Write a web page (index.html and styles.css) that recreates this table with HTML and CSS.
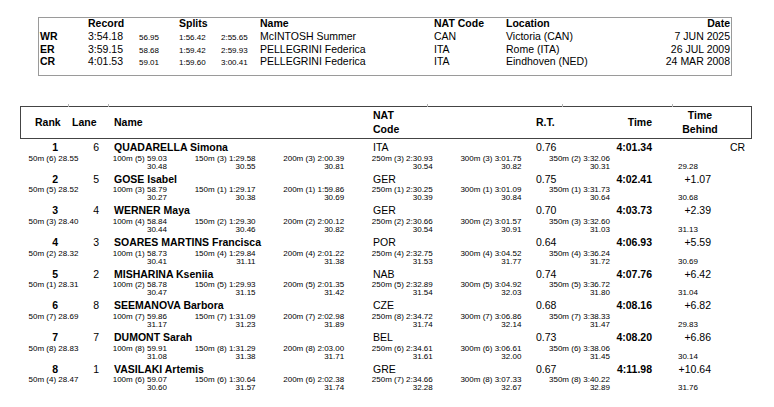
FILE: index.html
```html
<!DOCTYPE html>
<html>
<head>
<meta charset="utf-8">
<link rel="stylesheet" href="styles.css">
</head>
<body>
<div class="records">
  <div class="rec-row rec-head">
    <span></span><span>Record</span><span></span><span>Splits</span><span></span><span>Name</span><span>NAT Code</span><span>Location</span><span class="date">Date</span>
  </div>
  <div class="rec-row">
    <span class="code">WR</span><span>3:54.18</span><span class="sm">56.95</span><span class="sm">1:56.42</span><span class="sm">2:55.65</span><span>McINTOSH Summer</span><span>CAN</span><span>Victoria (CAN)</span><span class="date">7 JUN 2025</span>
  </div>
  <div class="rec-row">
    <span class="code">ER</span><span>3:59.15</span><span class="sm">58.68</span><span class="sm">1:59.42</span><span class="sm">2:59.93</span><span>PELLEGRINI Federica</span><span>ITA</span><span>Rome (ITA)</span><span class="date">26 JUL 2009</span>
  </div>
  <div class="rec-row">
    <span class="code">CR</span><span>4:01.53</span><span class="sm">59.01</span><span class="sm">1:59.60</span><span class="sm">3:00.41</span><span>PELLEGRINI Federica</span><span>ITA</span><span>Eindhoven (NED)</span><span class="date">24 MAR 2008</span>
  </div>
</div>

<div class="results">
  <div class="res-head">
    <i class="tick t1"></i><i class="tick t2"></i><i class="tick t3"></i><i class="tick t4"></i><i class="tick t5"></i>
    <span>Rank</span><span>Lane</span><span>Name</span><span>NAT<br>Code</span><span>R.T.</span><span class="h-time">Time</span><span class="h-behind">Time<br>Behind</span><span></span>
  </div>

  <div class="athlete">
    <div class="main"><span class="rank">1</span><span class="lane">6</span><span class="name">QUADARELLA Simona</span><span>ITA</span><span>0.76</span><span class="time">4:01.34</span><span class="behind"></span><span class="rec">CR</span></div>
    <div class="splits">
      <div class="sp"><span>50m (6) 28.55</span></div>
      <div class="sp"><span>100m (5) 59.03</span><span>30.48</span></div>
      <div class="sp"><span>150m (3) 1:29.58</span><span>30.55</span></div>
      <div class="sp"><span>200m (3) 2:00.39</span><span>30.81</span></div>
      <div class="sp"><span>250m (3) 2:30.93</span><span>30.54</span></div>
      <div class="sp"><span>300m (3) 3:01.75</span><span>30.82</span></div>
      <div class="sp"><span>350m (2) 3:32.06</span><span>30.31</span></div>
      <div class="lap"><span>&nbsp;</span><span>29.28</span></div>
    </div>
  </div>

  <div class="athlete">
    <div class="main"><span class="rank">2</span><span class="lane">5</span><span class="name">GOSE Isabel</span><span>GER</span><span>0.75</span><span class="time">4:02.41</span><span class="behind">+1.07</span><span class="rec"></span></div>
    <div class="splits">
      <div class="sp"><span>50m (5) 28.52</span></div>
      <div class="sp"><span>100m (3) 58.79</span><span>30.27</span></div>
      <div class="sp"><span>150m (1) 1:29.17</span><span>30.38</span></div>
      <div class="sp"><span>200m (1) 1:59.86</span><span>30.69</span></div>
      <div class="sp"><span>250m (1) 2:30.25</span><span>30.39</span></div>
      <div class="sp"><span>300m (1) 3:01.09</span><span>30.84</span></div>
      <div class="sp"><span>350m (1) 3:31.73</span><span>30.64</span></div>
      <div class="lap"><span>&nbsp;</span><span>30.68</span></div>
    </div>
  </div>

  <div class="athlete">
    <div class="main"><span class="rank">3</span><span class="lane">4</span><span class="name">WERNER Maya</span><span>GER</span><span>0.70</span><span class="time">4:03.73</span><span class="behind">+2.39</span><span class="rec"></span></div>
    <div class="splits">
      <div class="sp"><span>50m (3) 28.40</span></div>
      <div class="sp"><span>100m (4) 58.84</span><span>30.44</span></div>
      <div class="sp"><span>150m (2) 1:29.30</span><span>30.46</span></div>
      <div class="sp"><span>200m (2) 2:00.12</span><span>30.82</span></div>
      <div class="sp"><span>250m (2) 2:30.66</span><span>30.54</span></div>
      <div class="sp"><span>300m (2) 3:01.57</span><span>30.91</span></div>
      <div class="sp"><span>350m (3) 3:32.60</span><span>31.03</span></div>
      <div class="lap"><span>&nbsp;</span><span>31.13</span></div>
    </div>
  </div>

  <div class="athlete">
    <div class="main"><span class="rank">4</span><span class="lane">3</span><span class="name">SOARES MARTINS Francisca</span><span>POR</span><span>0.64</span><span class="time">4:06.93</span><span class="behind">+5.59</span><span class="rec"></span></div>
    <div class="splits">
      <div class="sp"><span>50m (2) 28.32</span></div>
      <div class="sp"><span>100m (1) 58.73</span><span>30.41</span></div>
      <div class="sp"><span>150m (4) 1:29.84</span><span>31.11</span></div>
      <div class="sp"><span>200m (4) 2:01.22</span><span>31.38</span></div>
      <div class="sp"><span>250m (4) 2:32.75</span><span>31.53</span></div>
      <div class="sp"><span>300m (4) 3:04.52</span><span>31.77</span></div>
      <div class="sp"><span>350m (4) 3:36.24</span><span>31.72</span></div>
      <div class="lap"><span>&nbsp;</span><span>30.69</span></div>
    </div>
  </div>

  <div class="athlete">
    <div class="main"><span class="rank">5</span><span class="lane">2</span><span class="name">MISHARINA Kseniia</span><span>NAB</span><span>0.74</span><span class="time">4:07.76</span><span class="behind">+6.42</span><span class="rec"></span></div>
    <div class="splits">
      <div class="sp"><span>50m (1) 28.31</span></div>
      <div class="sp"><span>100m (2) 58.78</span><span>30.47</span></div>
      <div class="sp"><span>150m (5) 1:29.93</span><span>31.15</span></div>
      <div class="sp"><span>200m (5) 2:01.35</span><span>31.42</span></div>
      <div class="sp"><span>250m (5) 2:32.89</span><span>31.54</span></div>
      <div class="sp"><span>300m (5) 3:04.92</span><span>32.03</span></div>
      <div class="sp"><span>350m (5) 3:36.72</span><span>31.80</span></div>
      <div class="lap"><span>&nbsp;</span><span>31.04</span></div>
    </div>
  </div>

  <div class="athlete">
    <div class="main"><span class="rank">6</span><span class="lane">8</span><span class="name">SEEMANOVA Barbora</span><span>CZE</span><span>0.68</span><span class="time">4:08.16</span><span class="behind">+6.82</span><span class="rec"></span></div>
    <div class="splits">
      <div class="sp"><span>50m (7) 28.69</span></div>
      <div class="sp"><span>100m (7) 59.86</span><span>31.17</span></div>
      <div class="sp"><span>150m (7) 1:31.09</span><span>31.23</span></div>
      <div class="sp"><span>200m (7) 2:02.98</span><span>31.89</span></div>
      <div class="sp"><span>250m (8) 2:34.72</span><span>31.74</span></div>
      <div class="sp"><span>300m (7) 3:06.86</span><span>32.14</span></div>
      <div class="sp"><span>350m (7) 3:38.33</span><span>31.47</span></div>
      <div class="lap"><span>&nbsp;</span><span>29.83</span></div>
    </div>
  </div>

  <div class="athlete">
    <div class="main"><span class="rank">7</span><span class="lane">7</span><span class="name">DUMONT Sarah</span><span>BEL</span><span>0.73</span><span class="time">4:08.20</span><span class="behind">+6.86</span><span class="rec"></span></div>
    <div class="splits">
      <div class="sp"><span>50m (8) 28.83</span></div>
      <div class="sp"><span>100m (8) 59.91</span><span>31.08</span></div>
      <div class="sp"><span>150m (8) 1:31.29</span><span>31.38</span></div>
      <div class="sp"><span>200m (8) 2:03.00</span><span>31.71</span></div>
      <div class="sp"><span>250m (6) 2:34.61</span><span>31.61</span></div>
      <div class="sp"><span>300m (6) 3:06.61</span><span>32.00</span></div>
      <div class="sp"><span>350m (6) 3:38.06</span><span>31.45</span></div>
      <div class="lap"><span>&nbsp;</span><span>30.14</span></div>
    </div>
  </div>

  <div class="athlete">
    <div class="main"><span class="rank">8</span><span class="lane">1</span><span class="name">VASILAKI Artemis</span><span>GRE</span><span>0.67</span><span class="time">4:11.98</span><span class="behind">+10.64</span><span class="rec"></span></div>
    <div class="splits">
      <div class="sp"><span>50m (4) 28.47</span></div>
      <div class="sp"><span>100m (6) 59.07</span><span>30.60</span></div>
      <div class="sp"><span>150m (6) 1:30.64</span><span>31.57</span></div>
      <div class="sp"><span>200m (6) 2:02.38</span><span>31.74</span></div>
      <div class="sp"><span>250m (7) 2:34.66</span><span>32.28</span></div>
      <div class="sp"><span>300m (8) 3:07.33</span><span>32.67</span></div>
      <div class="sp"><span>350m (8) 3:40.22</span><span>32.89</span></div>
      <div class="lap"><span>&nbsp;</span><span>31.76</span></div>
    </div>
  </div>
</div>
</body>
</html>
```

FILE: styles.css
```css
* { box-sizing: border-box; margin: 0; padding: 0; }
html, body { background: #fff; }
body {
  margin: 0;
  width: 774px;
  font-family: "Liberation Sans", Arial, sans-serif;
  color: #000;
}

/* Records table */
.records {
  margin: 17px 0 0 38px;
  width: 694px;
  border: 1px solid #9a9a9a;
  padding: 0 1px 6.25px 1px;
  font-size: 10.5px;
}
.rec-row {
  display: grid;
  grid-template-columns: 48px 51px 40px 42px 39px 174px 72px 1fr auto;
  align-items: baseline;
  line-height: 11.5px;
  white-space: nowrap;
}
.rec-head {
  font-weight: bold;
  line-height: 11px;
  margin-bottom: 2.25px;
}
.rec-row .code { font-weight: bold; }
.rec-row .sm { font-size: 8px; }
.rec-row .date { text-align: right; }

/* Results table */
.results {
  margin: 30px 0 0 20px;
  width: 732px;
  font-size: 10.5px;
}
.res-head {
  position: relative;
  height: 33px;
  border: 1px solid #444;
  display: grid;
  grid-template-columns: 37px 42px 259px 163px 66px 50px 96px 1fr;
  padding-left: 14px;
  align-items: center;
  font-weight: bold;
  line-height: 13.5px;
  margin-bottom: 2px;
}
.h-time { text-align: right; }
.h-behind { text-align: center; }

/* small column-separator stubs above the header frame */
.tick {
  position: absolute;
  top: -3px;
  width: 1px;
  height: 3px;
  background: #b5b5b5;
}
.t1 { left: 47px; }
.t2 { left: 87px; }
.t3 { left: 406px; }
.t4 { left: 541px; }
.t5 { left: 651px; }

.athlete { padding: 0 1px 2.2px; }
.main {
  display: grid;
  grid-template-columns: 37px 41px 274px 163px 66px 50px 59px 1fr;
  line-height: 13px;
  height: 13px;
  white-space: nowrap;
}
.rank { text-align: right; font-weight: bold; }
.lane { text-align: right; }
.name { padding-left: 15px; font-weight: bold; }
.time { text-align: right; font-weight: bold; }
.behind { text-align: right; }
.rec { padding-left: 19px; }

.splits {
  display: grid;
  grid-template-columns: 57.4px repeat(6, 88.6px) 1fr;
  margin-top: 0.5px;
  font-size: 8px;
  line-height: 8px;
  white-space: nowrap;
}
.sp {
  display: flex;
  flex-direction: column;
  align-items: flex-end;
}
.lap {
  display: flex;
  flex-direction: column;
  padding-left: 68px;
}
```
